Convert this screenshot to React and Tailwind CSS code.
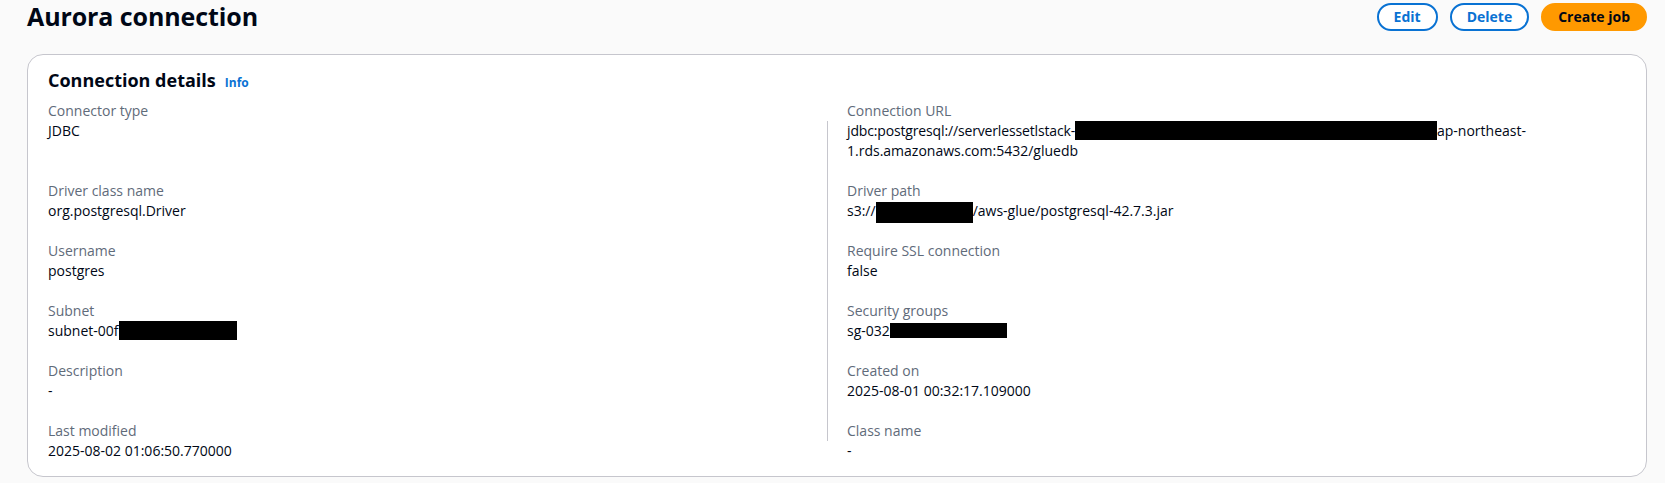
const Redact = ({ w, h = 19, mt = 0, className = '' }) => (
  <span
    className={`inline-block bg-black align-top ${className}`}
    style={{ width: w, height: h, marginTop: mt, marginBottom: 20 - h - mt }}
  />
);

const Field = ({ label, children }) => (
  <div>
    <div className="text-[14px] leading-[20px] text-[#5f6b7a]">{label}</div>
    <div className="text-[14px] leading-[20px] text-[#000716]">{children}</div>
  </div>
);

export default function App() {
  return (
    <div className="h-[483px] w-full overflow-hidden bg-[#fafafa] pl-[27px] pr-[18px] font-['Open_Sans',sans-serif] text-[#000716]">
      {/* Page header */}
      <div className="flex h-[34px] items-start justify-between">
        <h1 className="mt-[1px] text-[25px] font-bold leading-[30px] tracking-[-0.1px] text-[#000716]">
          Aurora connection
        </h1>
        <div className="mt-[3px] flex items-center gap-3">
          <button className="h-[28px] rounded-full border-2 border-[#0972d3] bg-white px-[15px] text-[14px] font-bold leading-[20px] text-[#0972d3]">
            Edit
          </button>
          <button className="h-[28px] rounded-full border-2 border-[#0972d3] bg-white px-[15px] text-[14px] font-bold leading-[20px] text-[#0972d3]">
            Delete
          </button>
          <button className="h-[28px] rounded-full border-2 border-[#ff9900] bg-[#ff9900] px-[15px] text-[14px] font-bold leading-[20px] text-[#000716]">
            Create job
          </button>
        </div>
      </div>

      {/* Connection details card */}
      <div className="mt-[20px] rounded-[16px] border border-[#c6c6cd] bg-white px-[20px] pb-[15px] pt-[14px]">
        <div className="flex items-baseline gap-[9px]">
          <h2 className="text-[18px] font-bold leading-[22px]">Connection details</h2>
          <span className="text-[12px] font-bold leading-[16px] text-[#0972d3]">Info</span>
        </div>

        <div className="mt-[10px] grid grid-cols-[779px_1fr]">
          <div className="flex flex-col gap-[20px]">
            <div className="h-[60px]">
              <Field label="Connector type">JDBC</Field>
            </div>
            <Field label="Driver class name">org.postgresql.Driver</Field>
            <Field label="Username">postgres</Field>
            <Field label="Subnet">
              subnet-00f<Redact w={118} h={19} />
            </Field>
            <Field label="Description">-</Field>
            <Field label="Last modified">2025-08-02 01:06:50.770000</Field>
          </div>

          <div className="relative flex flex-col gap-[20px] pl-[20px]">
            <span className="absolute bottom-[20px] left-0 top-[20px] w-px bg-[#c6c6cd]" />
            <Field label="Connection URL">
              <span className="tracking-[-0.15px]">jdbc:postgresql://serverlessetlstack-</span>
              <Redact w={362} h={19} />ap-northeast-
              <br />
              1.rds.amazonaws.com:5432/gluedb
            </Field>
            <Field label="Driver path">
              s3://<Redact w={97} h={21} mt={1} />/aws-glue/postgresql-42.7.3.jar
            </Field>
            <Field label="Require SSL connection">false</Field>
            <Field label="Security groups">
              sg-032<Redact w={117} h={15} mt={2} />
            </Field>
            <Field label="Created on">2025-08-01 00:32:17.109000</Field>
            <Field label="Class name">-</Field>
          </div>
        </div>
      </div>
    </div>
  );
}
